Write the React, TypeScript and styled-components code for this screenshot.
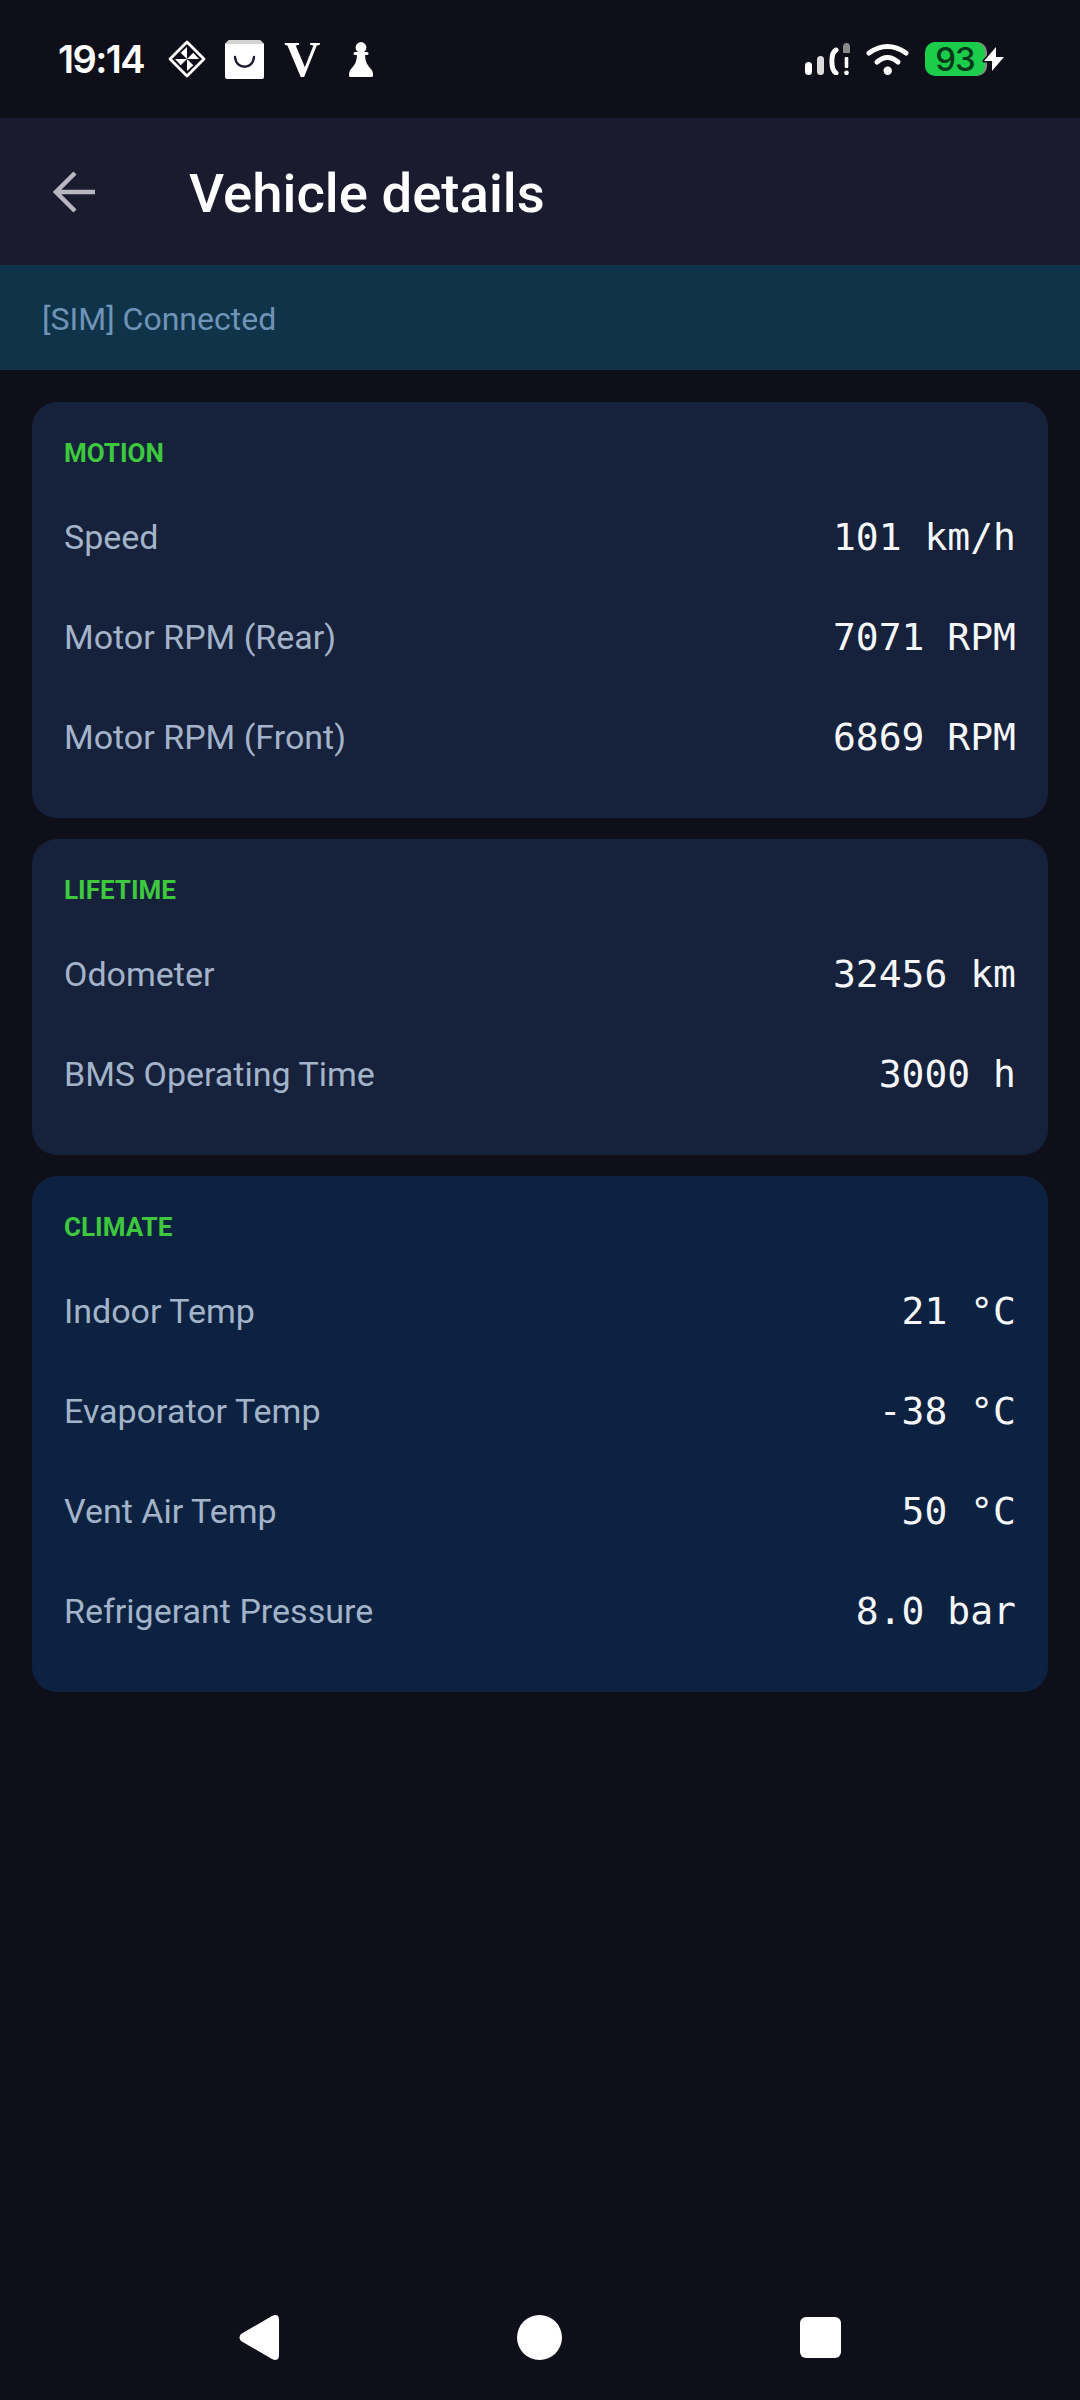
import * as React from 'react';
import styled, { createGlobalStyle } from 'styled-components';

const GlobalStyle = createGlobalStyle`
  html, body {
    margin: 0;
    padding: 0;
    background-color: #0e0f18;
  }
`;

const Page = styled.div`
  display: flex;
  flex-direction: column;
  width: 1080px;
  height: 2400px;
  background-color: #0e0f18;
  font-family: Roboto, "Liberation Sans", sans-serif;
`;

const StatusBar = styled.div`
  display: flex;
  justify-content: space-between;
  align-items: center;
  flex: none;
  height: 118px;
  padding: 0 75px 0 58px;
  box-sizing: border-box;
`;

const StatusGroup = styled.div`
  display: flex;
  align-items: center;
`;

const Clock = styled.span`
  margin-right: 24px;
  color: #fff;
  font-family: Inter, Roboto, sans-serif;
  font-size: 38px;
  font-weight: 600;
  letter-spacing: -1.6px;
`;

const StatusIcon = styled.svg<{ $gap?: number }>`
  display: block;
  flex: none;
  margin-right: ${p => p.$gap ?? 0}px;
`;

const VLogo = styled.span`
  display: block;
  width: 37px;
  margin-right: 28px;
  color: #fff;
  font-family: "Liberation Serif", serif;
  font-size: 50px;
  font-weight: 700;
  line-height: 38px;
  text-align: center;
`;

const BatteryWrap = styled.div`
  position: relative;
  width: 80px;
  height: 34px;
`;

const BatteryPill = styled.div`
  display: flex;
  justify-content: center;
  align-items: center;
  width: 60px;
  height: 34px;
  border-radius: 10px;
  background-color: #1ccd4c;
  box-shadow: 2px 0 0 #8b8b8b;
  color: #06381a;
  font-family: Inter, Roboto, sans-serif;
  font-size: 33px;
  font-weight: 500;
  letter-spacing: -1px;
`;

const BoltIcon = styled.svg`
  position: absolute;
  top: 4px;
  left: 57px;
`;

const Header = styled.div`
  display: flex;
  align-items: center;
  flex: none;
  gap: 94px;
  height: 147px;
  padding-left: 53px;
  box-sizing: border-box;
  background-color: #1a1b2e;
`;

const Title = styled.h1`
  margin: 0;
  padding-top: 3px;
  color: #fff;
  font-size: 54.5px;
  font-weight: 500;
`;

const Banner = styled.div`
  display: flex;
  align-items: center;
  flex: none;
  height: 105px;
  padding: 2px 0 0 42px;
  box-sizing: border-box;
  background-color: #0f3349;
  color: #6f94b8;
  font-size: 32px;
`;

const Content = styled.main`
  display: flex;
  flex-direction: column;
  flex: 1;
  gap: 21px;
  padding: 32px;
`;

const Card = styled.section<{ $tone?: 'slate' | 'navy' }>`
  padding: 32px;
  border-radius: 25px;
  background-color: ${p => (p.$tone === 'navy' ? '#0d2240' : '#16213c')};
`;

const SectionTitle = styled.h2`
  margin: 0 0 15px;
  padding-top: 1px;
  color: #3ec83e;
  font-size: 26px;
  font-weight: 700;
  line-height: 36px;
`;

const Row = styled.div`
  display: flex;
  justify-content: space-between;
  align-items: center;
  height: 100px;
  padding-top: 2px;
  box-sizing: border-box;
`;

const Label = styled.span`
  color: #a3b4c9;
  font-size: 34px;
`;

const Value = styled.span`
  color: #f6f7fa;
  font-family: "DejaVu Sans Mono", "Liberation Mono", monospace;
  font-size: 38px;
  white-space: pre;
`;

const NavBar = styled.nav`
  display: flex;
  justify-content: center;
  align-items: center;
  flex: none;
  gap: 238px;
  height: 126px;
`;

const NavCircle = styled.div`
  width: 45px;
  height: 45px;
  border-radius: 50%;
  background-color: #fff;
`;

const NavSquare = styled.div`
  width: 41px;
  height: 41px;
  border-radius: 6px;
  background-color: #fff;
`;

const sections = [
  {
    title: 'MOTION',
    tone: 'slate' as const,
    rows: [
      ['Speed', '101 km/h'],
      ['Motor RPM (Rear)', '7071 RPM'],
      ['Motor RPM (Front)', '6869 RPM'],
    ],
  },
  {
    title: 'LIFETIME',
    tone: 'slate' as const,
    rows: [
      ['Odometer', '32456 km'],
      ['BMS Operating Time', '3000 h'],
    ],
  },
  {
    title: 'CLIMATE',
    tone: 'navy' as const,
    rows: [
      ['Indoor Temp', '21 °C'],
      ['Evaporator Temp', '-38 °C'],
      ['Vent Air Temp', '50 °C'],
      ['Refrigerant Pressure', '8.0 bar'],
    ],
  },
];

const DiamondIcon = () => (
  <StatusIcon $gap={19} width="38" height="38" viewBox="0 0 38 38">
    <path d="M19 2 L36 19 L19 36 L2 19 Z" fill="none" stroke="#fff" strokeWidth="2.8" strokeLinejoin="round" />
    <path d="M19 7 L19 19 L12.7 12.7 Z M31 19 L19 19 L25.3 12.7 Z M19 31 L19 19 L25.3 25.3 Z M7 19 L19 19 L12.7 25.3 Z" fill="#fff" />
  </StatusIcon>
);

const BagIcon = () => (
  <StatusIcon $gap={20} width="39" height="39" viewBox="0 0 39 39">
    <path d="M4 0 H35 L39 4 V37 Q39 39 37 39 H2 Q0 39 0 37 V4 Z" fill="#fff" />
    <path d="M4 0 H35 L39 4 H0 Z" fill="#d2d2d2" />
    <path d="M10 17 C11 30 28 30 29 17" fill="none" stroke="#1a1b2e" strokeWidth="2.4" strokeLinecap="round" />
  </StatusIcon>
);

const PawnIcon = () => (
  <StatusIcon width="24" height="35" viewBox="0 0 24 35">
    <circle cx="12" cy="5.5" r="5.4" fill="#fff" />
    <rect x="4.5" y="10" width="15" height="3" rx="1.5" fill="#fff" />
    <path d="M8 12 H16 C16 20 19 24 22 27 Q24.5 30 24 34 Q24 35 22 35 H2 Q0 35 0 34 Q-0.5 30 2 27 C5 24 8 20 8 12 Z" fill="#fff" />
  </StatusIcon>
);

const SignalIcon = () => (
  <StatusIcon $gap={16} width="45" height="32" viewBox="0 0 45 32">
    <rect x="0" y="19" width="7" height="13" rx="3.5" fill="#fff" />
    <rect x="12" y="13" width="7" height="19" rx="3.5" fill="#dcdcdc" />
    <path d="M31 7 C25.5 10 25.5 26 31 30" fill="none" stroke="#fff" strokeWidth="5" strokeLinecap="round" />
    <path d="M38 4 Q38 0 41.5 0 Q45 0 45 4 V10 H38 Z" fill="#8a8a8a" />
    <rect x="39.7" y="14" width="3.6" height="11" rx="1.2" fill="#fff" />
    <circle cx="41.5" cy="29.8" r="2.3" fill="#fff" />
  </StatusIcon>
);

const WifiIcon = () => (
  <StatusIcon $gap={16} width="43" height="32" viewBox="0 0 43 32">
    <path d="M3 10 Q21.5 -3 40 10" fill="none" stroke="#fff" strokeWidth="5" strokeLinecap="round" />
    <path d="M11 19 Q21.5 10 32 19" fill="none" stroke="#fff" strokeWidth="5" strokeLinecap="round" />
    <circle cx="21.7" cy="27.7" r="4.2" fill="#fff" />
  </StatusIcon>
);

const BackArrow = () => (
  <svg width="42" height="42" viewBox="0 0 42 42" style={{ display: 'block', flex: 'none' }}>
    <path d="M42 21 H4 M22 2 L3 21 L22 40" fill="none" stroke="#b9b6bf" strokeWidth="4.5" />
  </svg>
);

const NavBack = () => (
  <svg width="40" height="45" viewBox="0 0 40 45" style={{ display: 'block', flex: 'none' }}>
    <path d="M33 1 Q40 -2 40 5 V40 Q40 47 33 44 L2 26 Q-1 22.5 2 19 Z" fill="#fff" />
  </svg>
);

const App = () => {
  return (
    <Page>
      <GlobalStyle />
      <StatusBar>
        <StatusGroup>
          <Clock>19:14</Clock>
          <DiamondIcon />
          <BagIcon />
          <VLogo>V</VLogo>
          <PawnIcon />
        </StatusGroup>
        <StatusGroup>
          <SignalIcon />
          <WifiIcon />
          <BatteryWrap>
            <BatteryPill>93</BatteryPill>
            <BoltIcon width="24" height="26" viewBox="0 0 24 26">
              <path
                d="M14 1 L2 15 H10 L10 25 L22 11 H14 Z"
                fill="#fff"
                stroke="#0e0f18"
                strokeWidth="3"
                strokeLinejoin="round"
                paintOrder="stroke"
              />
            </BoltIcon>
          </BatteryWrap>
        </StatusGroup>
      </StatusBar>

      <Header>
        <BackArrow />
        <Title>Vehicle details</Title>
      </Header>

      <Banner>[SIM] Connected</Banner>

      <Content>
        {sections.map(section => (
          <Card key={section.title} $tone={section.tone}>
            <SectionTitle>{section.title}</SectionTitle>
            {section.rows.map(([label, value]) => (
              <Row key={label}>
                <Label>{label}</Label>
                <Value>{value}</Value>
              </Row>
            ))}
          </Card>
        ))}
      </Content>

      <NavBar>
        <NavBack />
        <NavCircle />
        <NavSquare />
      </NavBar>
    </Page>
  );
};

export default App;
